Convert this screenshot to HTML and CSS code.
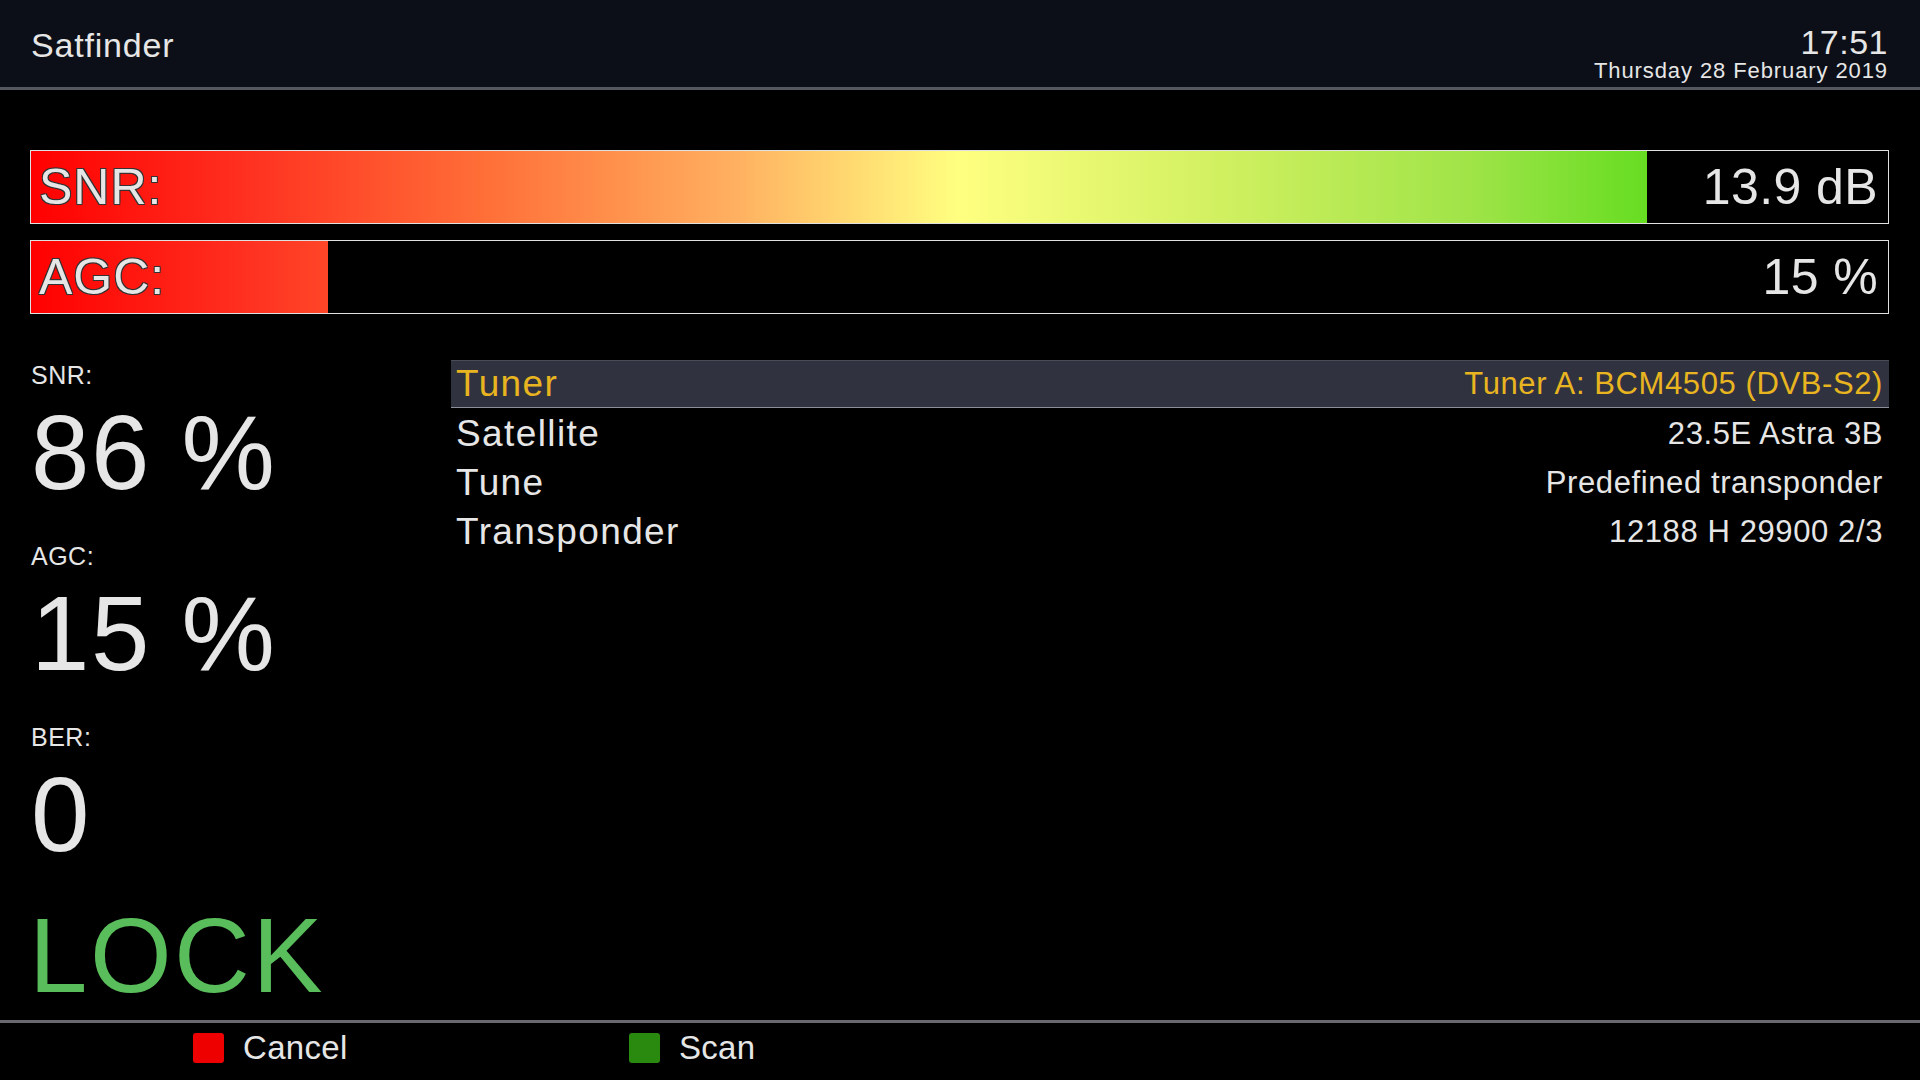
FILE: index.html
```html
<!DOCTYPE html>
<html lang="en">
<head>
    <meta charset="UTF-8">
    <title>Satfinder</title>
    <link rel="stylesheet" href="styles.css">
</head>
<body>
    <header>
        <div class="title">Satfinder</div>
        <div class="clock">
            <div class="time">17:51</div>
            <div class="date">Thursday 28 February 2019</div>
        </div>
    </header>

    <main>
        <!-- Signal bars -->
        <div class="bars">
            <div class="bar">
                <div class="fill" style="width: 87%"></div>
                <span class="bar-label">SNR:</span>
                <span class="bar-value">13.9 dB</span>
            </div>
            <div class="bar">
                <div class="fill" style="width: 16%"></div>
                <span class="bar-label">AGC:</span>
                <span class="bar-value">15 %</span>
            </div>
        </div>

        <div class="body">
            <!-- Numeric readouts -->
            <div class="stats">
                <div class="stat">
                    <div class="stat-label">SNR:</div>
                    <div class="stat-value">86 %</div>
                </div>
                <div class="stat">
                    <div class="stat-label">AGC:</div>
                    <div class="stat-value">15 %</div>
                </div>
                <div class="stat">
                    <div class="stat-label">BER:</div>
                    <div class="stat-value">0</div>
                </div>
                <div class="lock">LOCK</div>
            </div>

            <!-- Config list -->
            <div class="list">
                <div class="row selected">
                    <span class="name">Tuner</span>
                    <span class="value">Tuner A: BCM4505 (DVB-S2)</span>
                </div>
                <div class="row">
                    <span class="name">Satellite</span>
                    <span class="value">23.5E Astra 3B</span>
                </div>
                <div class="row">
                    <span class="name">Tune</span>
                    <span class="value">Predefined transponder</span>
                </div>
                <div class="row">
                    <span class="name">Transponder</span>
                    <span class="value">12188 H 29900 2/3</span>
                </div>
            </div>
        </div>
    </main>

    <footer>
        <div class="key"><span class="btn red"></span>Cancel</div>
        <div class="key"><span class="btn green"></span>Scan</div>
    </footer>
</body>
</html>
```

FILE: styles.css
```css
/* Full screen TV layout */
html, body {
    margin: 0;
    padding: 0;
}

body {
    width: 1920px;
    height: 1080px;
    background-color: #000;
    color: #e6e6e6;
    font-family: "Liberation Sans", Arial, sans-serif;
    display: flex;
    flex-direction: column;
    overflow: hidden;
}

/* Top bar */
header {
    height: 87px;
    background-color: #0c0f17;
    border-bottom: 3px solid #55585f;
    display: flex;
    justify-content: space-between;
    align-items: flex-start;
    padding: 0 32px 0 31px;
    flex-shrink: 0;
}

.title {
    font-size: 34px;
    line-height: 34px;
    margin-top: 28px;
    letter-spacing: 0.8px;
}

.clock {
    text-align: right;
    padding-top: 26px;
}

.time {
    font-size: 34px;
    line-height: 32px;
    letter-spacing: 0.5px;
}

.date {
    font-size: 22px;
    line-height: 26px;
    letter-spacing: 0.9px;
}

/* Content area */
main {
    flex: 1;
    padding: 60px 31px 0 30px;
}

.bars {
    display: flex;
    flex-direction: column;
    gap: 16px;
}

.bar {
    position: relative;
    height: 72px;
    border: 1px solid #e0e0e0;
    display: flex;
    justify-content: space-between;
    align-items: center;
    padding: 0 10px 0 8px;
}

/* Gradient fill, sized to the whole bar so it clips */
.fill {
    position: absolute;
    left: 0;
    top: 0;
    bottom: 0;
    background-image: linear-gradient(to right,
        #ff0000 0%,
        #ff3020 11.5%,
        #ff7038 24.7%,
        #ffb060 37.9%,
        #ffff80 49.9%,
        #d0f060 64.2%,
        #a0e448 77.4%,
        #66dd22 87%,
        #44cc11 100%);
    background-size: 1858px 100%;
}

.bar-label,
.bar-value {
    position: relative;
    font-size: 50px;
    line-height: 72px;
}

.bar-label {
    letter-spacing: 1px;
    text-shadow: 1px 1px 0 #333, -1px -1px 0 #333, 1px -1px 0 #333, -1px 1px 0 #333;
}

.bar-value {
    letter-spacing: 0.4px;
}

.body {
    display: flex;
    margin-top: 46px;
}

/* Left readouts */
.stats {
    width: 420px;
    padding-left: 1px;
}

.stat {
    margin-bottom: 36px;
}

.stat-label {
    font-size: 25px;
    line-height: 30px;
    margin-bottom: 10px;
    letter-spacing: 0.5px;
}

.stat-value {
    font-size: 105px;
    line-height: 105px;
    letter-spacing: 1.5px;
}

.lock {
    font-size: 105px;
    line-height: 105px;
    color: #58bd5a;
    margin-top: 12px;
    margin-left: -2px;
    letter-spacing: 2.5px;
}

/* Right list */
.list {
    flex: 1;
}

.row {
    height: 49px;
    display: flex;
    justify-content: space-between;
    padding: 0 6px 0 5px;
    box-sizing: border-box;
}

.row .name {
    font-size: 37px;
    line-height: 49px;
    letter-spacing: 1.4px;
}

.row .value {
    font-size: 31px;
    line-height: 49px;
    letter-spacing: 0.6px;
}

.row.selected {
    height: 48px;
    margin-bottom: 1px;
    background-color: #30323f;
    border-top: 1px solid #4a4c56;
    border-bottom: 1px solid #8d8f98;
    color: #e8b520;
}

.row.selected .name,
.row.selected .value {
    line-height: 46px;
}

/* Bottom button bar */
footer {
    height: 57px;
    border-top: 3px solid #68686e;
    display: flex;
    padding-left: 193px;
    flex-shrink: 0;
}

.key {
    width: 436px;
    display: flex;
    align-items: center;
    font-size: 33px;
    height: 50px;
    letter-spacing: 0.3px;
}

.btn {
    width: 31px;
    height: 30px;
    border-radius: 3px;
    margin-right: 19px;
}

.btn.red {
    background-color: #ee0000;
}

.btn.green {
    background-color: #2a8a10;
}
```
